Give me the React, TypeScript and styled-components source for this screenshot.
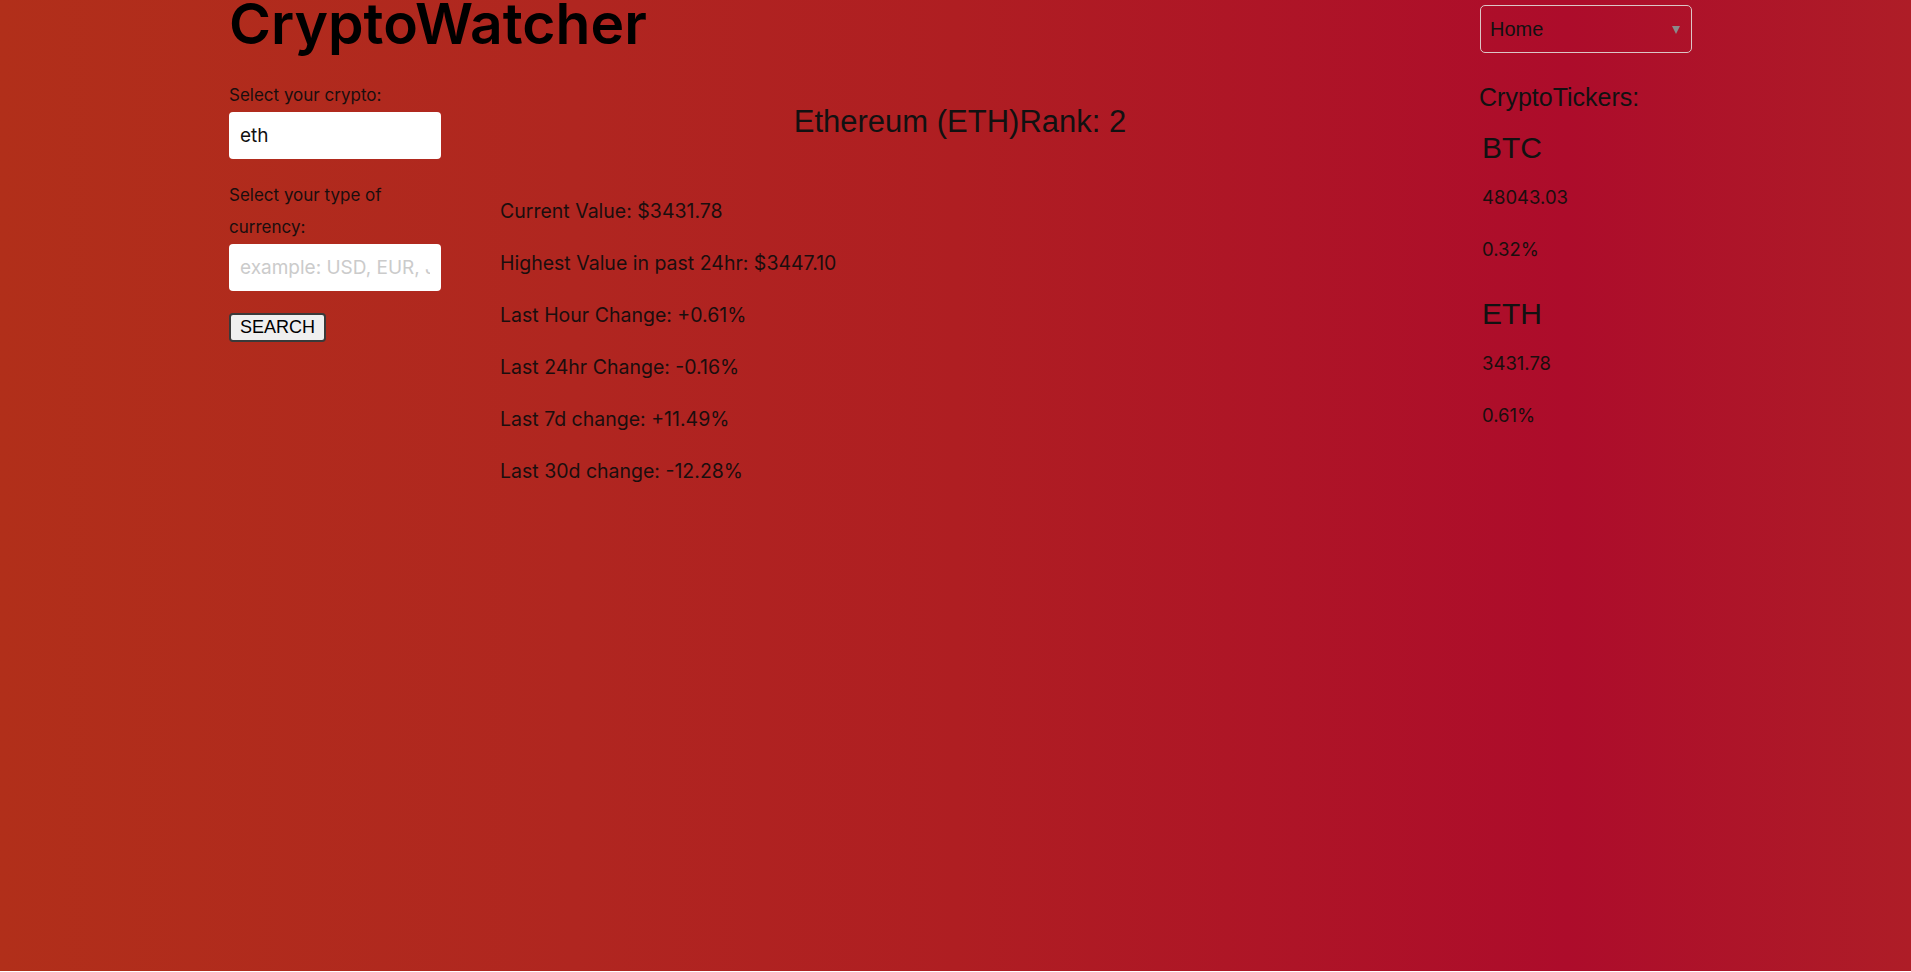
import React from "react";
import styled, { createGlobalStyle } from "styled-components";

const GlobalStyle = createGlobalStyle`
  html, body {
    margin: 0;
    padding: 0;
    background: #fff;
  }
  body {
    font-family: Inter, "Noto Sans", sans-serif;
    color: #111;
  }
  * {
    box-sizing: border-box;
  }
`;

const tickers = [
  { symbol: "BTC", price: "48043.03", change: "0.32%" },
  { symbol: "ETH", price: "3431.78", change: "0.61%" },
];

const stats = [
  "Current Value: $3431.78",
  "Highest Value in past 24hr: $3447.10",
  "Last Hour Change: +0.61%",
  "Last 24hr Change: -0.16%",
  "Last 7d change: +11.49%",
  "Last 30d change: -12.28%",
];

const App = () => {
  return (
    <>
      <GlobalStyle />
      <Page>
        <Header>
          <Title>CryptoWatcher</Title>
          <SelectWrap>
            <NavSelect defaultValue="home">
              <option value="home">Home</option>
              <option value="about">About</option>
            </NavSelect>
          </SelectWrap>
        </Header>

        <Main>
          <SearchForm onSubmit={(e) => e.preventDefault()}>
            <Label htmlFor="crypto">Select your crypto:</Label>
            <TextInput id="crypto" defaultValue="eth" />
            <Label htmlFor="currency" $spaced>
              Select your type of currency:
            </Label>
            <TextInput id="currency" placeholder="example: USD, EUR, JPY" />
            <SearchButton type="submit">SEARCH</SearchButton>
          </SearchForm>

          <Details>
            <CoinTitle>Ethereum (ETH)Rank: 2</CoinTitle>
            <StatList>
              {stats.map((s) => (
                <Stat key={s}>{s}</Stat>
              ))}
            </StatList>
          </Details>

          <Sidebar>
            <SideTitle>CryptoTickers:</SideTitle>
            <TickerList>
              {tickers.map((t) => (
                <Ticker key={t.symbol}>
                  <TickerName>{t.symbol}</TickerName>
                  <TickerValue>{t.price}</TickerValue>
                  <TickerValue>{t.change}</TickerValue>
                </Ticker>
              ))}
            </TickerList>
          </Sidebar>
        </Main>
      </Page>
    </>
  );
};

export default App;

const Page = styled.div`
  min-height: 971px;
  padding: 0 219px 0 229px;
  background: linear-gradient(
    90deg,
    #b12f1a 0%,
    #b02620 30%,
    #af1e22 50%,
    #ad0c2b 82%,
    #ae1d27 100%
  );
  overflow: hidden;
`;

const Header = styled.header`
  display: flex;
  justify-content: space-between;
  align-items: flex-start;
`;

const Title = styled.h1`
  margin: -5px 0 0;
  font-size: 57px;
  line-height: 1;
  font-weight: 600;
  color: #000;
  letter-spacing: 0;
`;

const SelectWrap = styled.div`
  position: relative;
  margin-top: 5px;
  width: 212px;
  height: 48px;

  &::after {
    content: "";
    position: absolute;
    right: 12px;
    top: 21px;
    border-left: 4px solid transparent;
    border-right: 4px solid transparent;
    border-top: 8px solid #8a8a8a;
    pointer-events: none;
  }
`;

const NavSelect = styled.select`
  appearance: none;
  width: 100%;
  height: 100%;
  padding: 0 30px 0 9px;
  background: transparent;
  border: 1px solid #dcc6c6;
  border-radius: 5px;
  font-family: "Liberation Sans", Arial, sans-serif;
  font-size: 20px;
  color: #111;
`;

const Main = styled.main`
  display: grid;
  grid-template-columns: 212px 1fr 213px;
  column-gap: 59px;
  margin-top: 26px;
`;

const SearchForm = styled.form`
  display: flex;
  flex-direction: column;
  align-items: flex-start;
`;

const Label = styled.label<{ $spaced?: boolean }>`
  font-size: 17px;
  line-height: 32px;
  color: #1a0e0e;
  margin-top: ${(p) => (p.$spaced ? "20px" : "0")};
`;

const TextInput = styled.input`
  width: 212px;
  height: 47px;
  margin-top: 1px;
  padding: 0 11px;
  border: none;
  border-radius: 4px;
  background: #fff;
  font-family: Inter, sans-serif;
  font-size: 19px;
  color: #111;
  outline: none;

  &::placeholder {
    color: #cbcbcb;
  }
`;

const SearchButton = styled.button`
  margin-top: 22px;
  width: 97px;
  height: 29px;
  padding: 0;
  background: #efefef;
  border: 2px solid #3a3a3a;
  border-radius: 4px;
  font-family: "Liberation Sans", Arial, sans-serif;
  font-size: 18px;
  color: #000;
`;

const Details = styled.section`
  display: flex;
  flex-direction: column;
`;

const CoinTitle = styled.h2`
  margin: 23px 0 0;
  text-align: center;
  font-family: "Liberation Sans", Arial, sans-serif;
  font-size: 31px;
  line-height: 40px;
  font-weight: 400;
  color: #111;
`;

const StatList = styled.div`
  margin-top: 43px;
  display: flex;
  flex-direction: column;
`;

const Stat = styled.p`
  margin: 0;
  font-size: 19.5px;
  line-height: 52px;
  color: #1a0e0e;
`;

const Sidebar = styled.aside`
  display: flex;
  flex-direction: column;
`;

const SideTitle = styled.h3`
  margin: 0;
  font-family: "Liberation Sans", Arial, sans-serif;
  font-size: 25px;
  line-height: 37px;
  font-weight: 400;
  color: #111;
`;

const TickerList = styled.div`
  margin-top: 12px;
  display: flex;
  flex-direction: column;
  gap: 19px;
`;

const Ticker = styled.div`
  padding-left: 3px;
  display: flex;
  flex-direction: column;
`;

const TickerName = styled.div`
  font-family: "Liberation Sans", Arial, sans-serif;
  font-size: 30px;
  line-height: 40px;
  color: #111;
  margin-bottom: 3px;
`;

const TickerValue = styled.div`
  font-size: 18.5px;
  line-height: 52px;
  color: #1a0e0e;
`;
